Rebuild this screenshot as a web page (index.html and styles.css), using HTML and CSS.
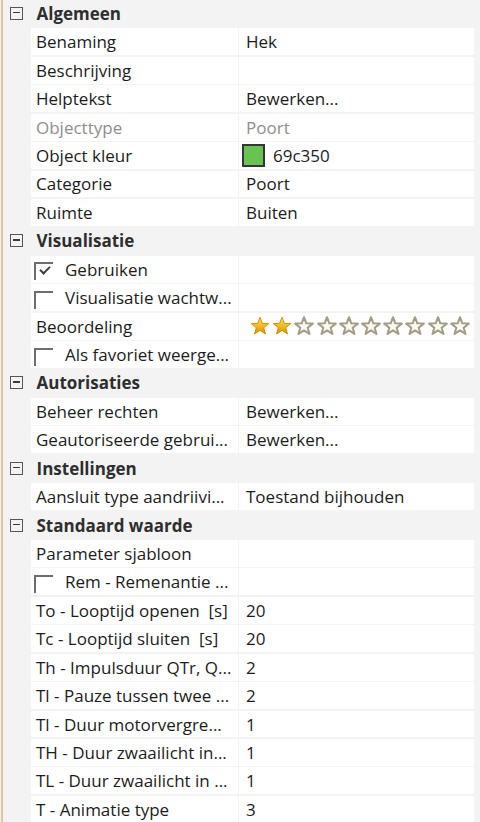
FILE: index.html
```html
<!DOCTYPE html>
<html lang="nl">
<head>
<meta charset="utf-8">
<title>Eigenschappen</title>
<link rel="stylesheet" href="styles.css">
</head>
<body>
<svg class="defs" width="0" height="0" aria-hidden="true">
  <defs>
    <linearGradient id="gold" x1="0" y1="0" x2="0" y2="1">
      <stop offset="0" stop-color="#fbe06a"/>
      <stop offset="0.55" stop-color="#f1b91a"/>
      <stop offset="1" stop-color="#d18f00"/>
    </linearGradient>
    <polygon id="star" points="10,1.2 12.3,7.3 18.8,7.6 13.7,11.7 15.5,18 10,14.4 4.5,18 6.3,11.7 1.2,7.6 7.7,7.3"/>
  </defs>
</svg>
<div class="grid">
  <div class="cat"><span class="tog"></span><span class="cat-title">Algemeen</span></div>
  <div class="row"><div class="name">Benaming</div><div class="val">Hek</div></div>
  <div class="row"><div class="name">Beschrijving</div><div class="val"></div></div>
  <div class="row"><div class="name">Helptekst</div><div class="val">Bewerken...</div></div>
  <div class="row off"><div class="name">Objecttype</div><div class="val">Poort</div></div>
  <div class="row"><div class="name">Object kleur</div><div class="val"><span class="swatch"></span>69c350</div></div>
  <div class="row"><div class="name">Categorie</div><div class="val">Poort</div></div>
  <div class="row"><div class="name">Ruimte</div><div class="val">Buiten</div></div>

  <div class="cat"><span class="tog"></span><span class="cat-title">Visualisatie</span></div>
  <div class="row"><div class="name chk"><span class="box checked"></span>Gebruiken</div><div class="val"></div></div>
  <div class="row"><div class="name chk"><span class="box"></span>Visualisatie wachtw...</div><div class="val"></div></div>
  <div class="row"><div class="name">Beoordeling</div><div class="val stars">
    <svg class="st on" viewBox="0 0 20 20"><use href="#star"/></svg>
    <svg class="st on" viewBox="0 0 20 20"><use href="#star"/></svg>
    <svg class="st" viewBox="0 0 20 20"><use href="#star"/></svg>
    <svg class="st" viewBox="0 0 20 20"><use href="#star"/></svg>
    <svg class="st" viewBox="0 0 20 20"><use href="#star"/></svg>
    <svg class="st" viewBox="0 0 20 20"><use href="#star"/></svg>
    <svg class="st" viewBox="0 0 20 20"><use href="#star"/></svg>
    <svg class="st" viewBox="0 0 20 20"><use href="#star"/></svg>
    <svg class="st" viewBox="0 0 20 20"><use href="#star"/></svg>
    <svg class="st" viewBox="0 0 20 20"><use href="#star"/></svg>
  </div></div>
  <div class="row"><div class="name chk"><span class="box"></span>Als favoriet weerge...</div><div class="val"></div></div>

  <div class="cat"><span class="tog"></span><span class="cat-title">Autorisaties</span></div>
  <div class="row"><div class="name">Beheer rechten</div><div class="val">Bewerken...</div></div>
  <div class="row"><div class="name">Geautoriseerde gebrui...</div><div class="val">Bewerken...</div></div>

  <div class="cat"><span class="tog"></span><span class="cat-title">Instellingen</span></div>
  <div class="row"><div class="name">Aansluit type aandriivi...</div><div class="val">Toestand bijhouden</div></div>

  <div class="cat"><span class="tog"></span><span class="cat-title">Standaard waarde</span></div>
  <div class="row"><div class="name">Parameter sjabloon</div><div class="val"></div></div>
  <div class="row"><div class="name chk"><span class="box"></span>Rem - Remenantie ...</div><div class="val"></div></div>
  <div class="row"><div class="name">To - Looptijd openen&nbsp; [s]</div><div class="val">20</div></div>
  <div class="row"><div class="name">Tc - Looptijd sluiten&nbsp; [s]</div><div class="val">20</div></div>
  <div class="row"><div class="name">Th - Impulsduur QTr, Q...</div><div class="val">2</div></div>
  <div class="row"><div class="name">Tl - Pauze tussen twee ...</div><div class="val">2</div></div>
  <div class="row"><div class="name">Tl - Duur motorvergre...</div><div class="val">1</div></div>
  <div class="row"><div class="name">TH - Duur zwaailicht in...</div><div class="val">1</div></div>
  <div class="row"><div class="name">TL - Duur zwaailicht in ...</div><div class="val">1</div></div>
  <div class="row"><div class="name">T - Animatie type</div><div class="val">3</div></div>
</div>
</body>
</html>
```

FILE: styles.css
```css
html, body {
  margin: 0;
  padding: 0;
  background: #f3f3f3;
  overflow: hidden;
}

body {
  font-family: "Segoe UI", "Open Sans", "Noto Sans", sans-serif;
  font-size: 17px;
  color: #1c1c1c;
}

.defs {
  position: absolute;
  width: 0;
  height: 0;
}

.grid {
  margin-left: 1px;
  border-left: 2px solid #d9c7a3;
  width: 477px;
  box-sizing: border-box;
  min-height: 822px;
}

.cat,
.row {
  height: 28.43px;
  box-sizing: border-box;
  padding-bottom: 1.5px;
}

.cat {
  display: flex;
  align-items: center;
  font-weight: 700;
  color: #2e2e2e;
}

.tog {
  position: relative;
  width: 13px;
  height: 13px;
  box-sizing: border-box;
  border: 1.5px solid #555;
  margin-left: 6.5px;
  margin-right: 14px;
}

.tog::after {
  content: "";
  position: absolute;
  left: 2px;
  right: 2px;
  top: 4px;
  height: 1.5px;
  background: #3a3a3a;
}

.cat-title {
  line-height: 1;
}

.row {
  display: grid;
  grid-template-columns: 207px 235px;
  column-gap: 1px;
  padding-left: 28px;
}

.name,
.val {
  background: #fff;
  display: flex;
  align-items: center;
  white-space: nowrap;
  overflow: hidden;
}

.name {
  padding-left: 5px;
}

.val {
  padding-left: 7px;
}

.off .name,
.off .val {
  color: #8e8e8e;
}

.name.chk {
  padding-left: 3px;
}

.box {
  position: relative;
  flex: none;
  width: 19px;
  height: 18px;
  box-sizing: border-box;
  border-top: 2px solid #6e6e6e;
  border-left: 2px solid #6e6e6e;
  margin-top: 4px;
  margin-right: 12px;
}

.box.checked::after {
  content: "";
  position: absolute;
  left: 3.5px;
  top: 2px;
  width: 8px;
  height: 4px;
  border-left: 2px solid #3e3e3e;
  border-bottom: 2px solid #3e3e3e;
  transform: rotate(-45deg);
  transform-origin: center;
}

.swatch {
  flex: none;
  width: 23px;
  height: 23px;
  box-sizing: border-box;
  border: 2px solid #363636;
  background: #69c350;
  margin-left: -4px;
  margin-right: 8px;
}

.val.stars {
  padding-left: 11px;
  gap: 2.2px;
}

.st {
  flex: none;
  width: 20px;
  height: 20px;
}

.st use {
  fill: #faf9f3;
  stroke: #a29c84;
  stroke-width: 2;
  stroke-linejoin: round;
}

.st.on use {
  fill: url(#gold);
  stroke: #c98c00;
  stroke-width: 0.9;
}
```
